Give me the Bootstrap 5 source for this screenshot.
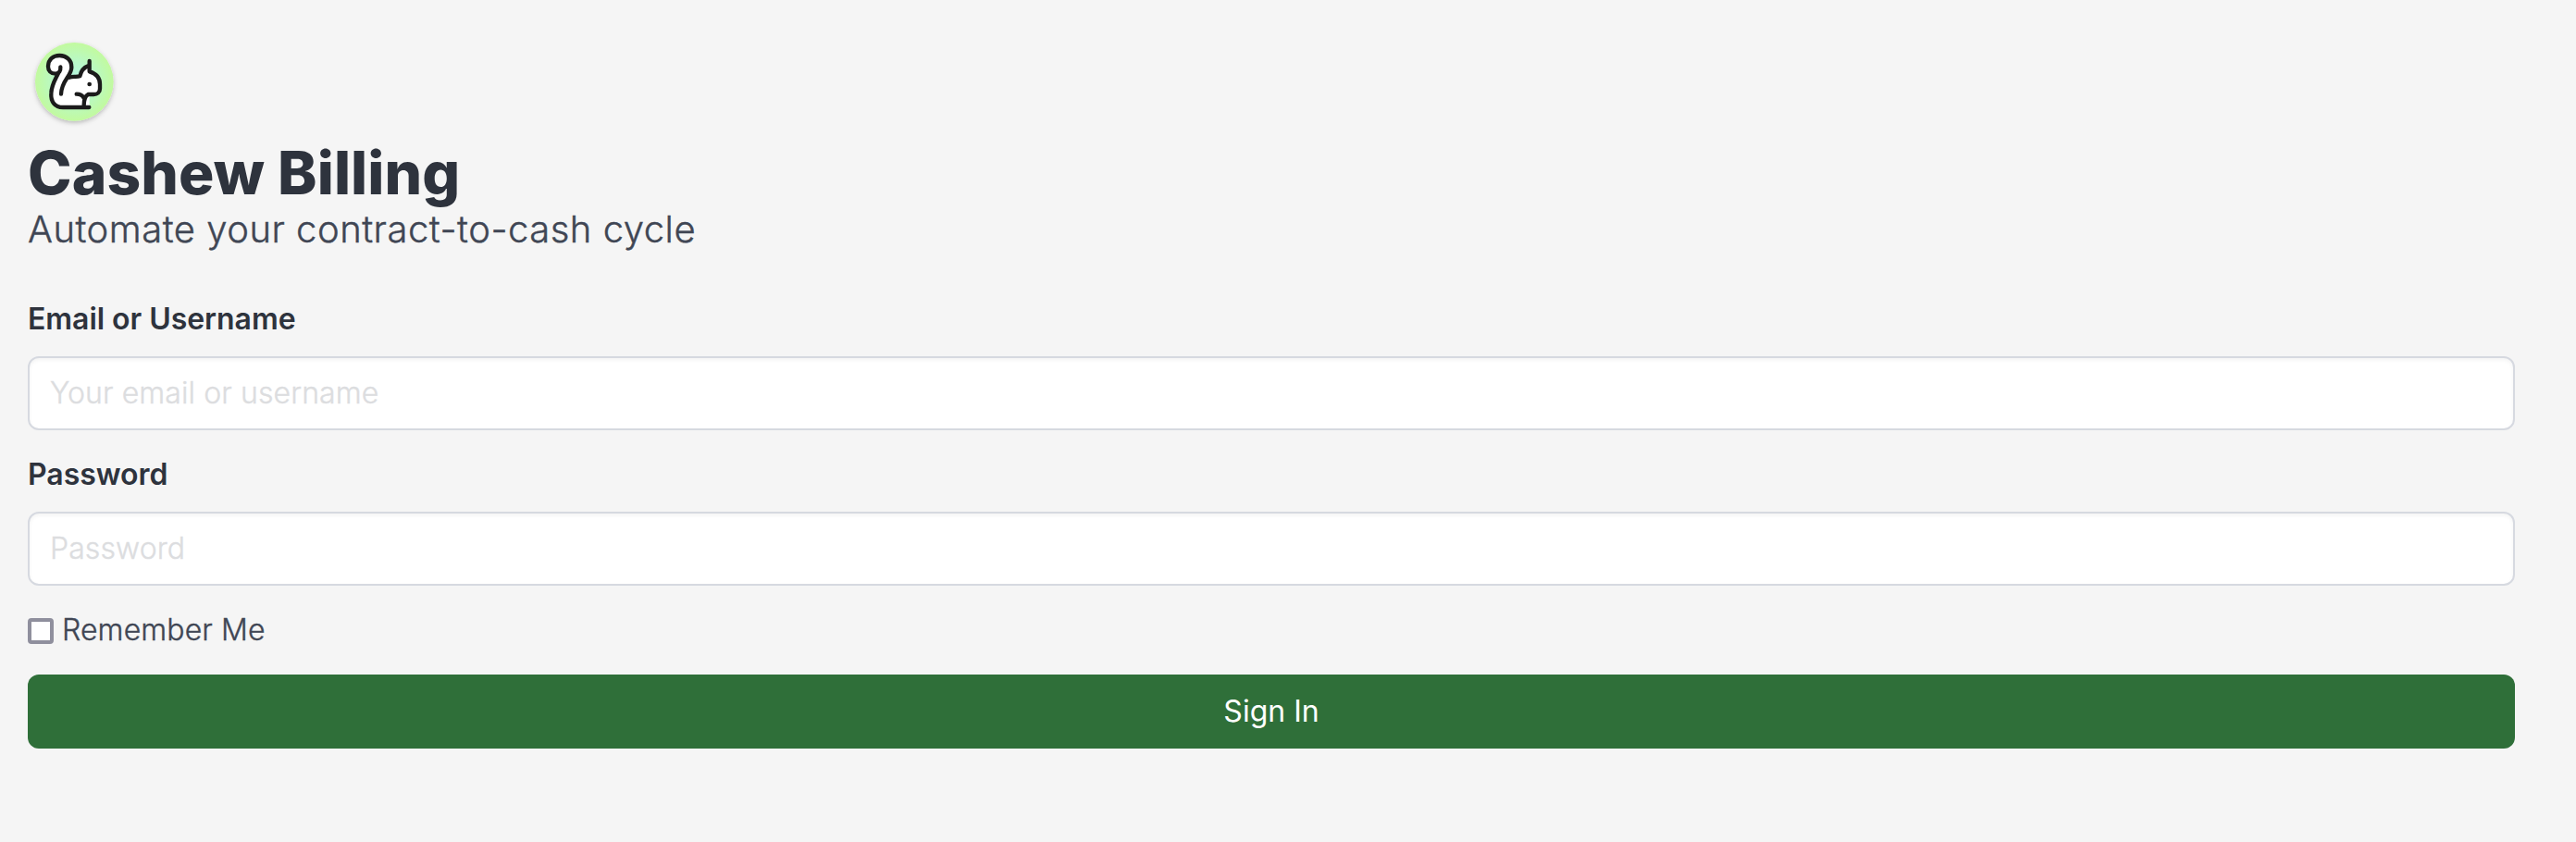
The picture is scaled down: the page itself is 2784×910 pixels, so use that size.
<!DOCTYPE html>
<html lang="en">
<head>
<meta charset="utf-8">
<title>Cashew Billing</title>
<link href="https://cdn.jsdelivr.net/npm/bootstrap@5.3.0/dist/css/bootstrap.min.css" rel="stylesheet">
<style>
  html { font-size: 32px; }
  body { background: #f5f5f5; color: #404654; font-family: Inter, sans-serif; font-weight: 300; line-height: 1.5; }
  .login { padding: 30px 66px 0 30px; }
  .logo { display: block; margin-bottom: 1px; }
  .title { font-size: 64px; font-weight: 800; line-height: 72px; color: #2e333d; letter-spacing: .08px; }
  .subtitle { font-size: 40px; line-height: 50px; margin-bottom: 48px; letter-spacing: .5px; }
  .subtitle, .remember, .form-control { -webkit-text-stroke-width: .4px; }
  .form-label { font-weight: 600; color: #2e333d; margin-bottom: 16px; display: block; letter-spacing: -.05px; }
  .form-control { height: 80px; border: 2px solid #d6d9e0; border-radius: 12px; padding: 0 22px 1px; font-weight: 300; letter-spacing: .1px; box-shadow: inset 0 2px 4px rgba(10,10,10,.05); background: #fff; }
  .form-control::placeholder { color: #dcdddf; opacity: 1; }
  .field { margin-bottom: 24px; }
  .remember { gap: 9px; letter-spacing: .1px; }
  .form-check-input[type=checkbox] { float: none; flex: none; width: 28px; height: 28px; margin: 2px 0 0; border: 4px solid #8f8f9d; border-radius: 4px; background-color: #fff; }
  .btn-sign { height: 80px; border: 0; border-radius: 12px; background: #2f6f39; color: #fff; font-weight: 400; }
</style>
</head>
<body>
<main class="login">
  <svg class="logo" width="110" height="120" viewBox="30 0 330 360" aria-label="Cashew logo">
    <defs>
      <radialGradient id="g"><stop offset="0" stop-color="#b5f5e6"/><stop offset=".5" stop-color="#b8f8c8"/><stop offset="1" stop-color="#c2fa9f"/></radialGradient>
      <filter id="s" x="-20%" y="-20%" width="140%" height="140%"><feDropShadow dx="0" dy="6" stdDeviation="8" flood-color="#000" flood-opacity=".25"/></filter>
    </defs>
    <circle cx="181" cy="175" r="127" fill="url(#g)" filter="url(#s)"/>
    <g stroke="#1b1b1b" stroke-width="13" stroke-linecap="round" stroke-linejoin="round" fill="#fff">
      <path stroke="none" d="M122 150C105 151 96 140 96 125C97 102 113 90 133 90C155 90 172 104 172 128C172 140 168 152 166 161C180 157 190 160 199 157C203 137 213 128 230 122V142C250 148 264 160 264 183V197C264 210 255 216 244 216L230 220V258H144C118 258 104 240 106 212C107 185 118 170 128 150Z"/>
      <path fill="none" d="M136 127C137 141 131 149 120 149C105 149 96 140 96 125C97 102 113 90 133 90C155 90 172 104 172 128C172 157 139 170 138 215"/>
      <path fill="none" d="M129 147C118 170 107 185 106 212C104 240 118 258 144 258H229M166 161C176 156 188 161 199 157C203 137 213 128 230 122V108M230 122V142C250 148 264 160 264 183V197C264 210 255 216 244 216H226Q212 223 212 252M188 215Q205 215 212 228"/>
      <circle cx="230" cy="183" r="7" fill="#1b1b1b" stroke="none"/>
    </g>
  </svg>
  <h1 class="title mb-0">Cashew Billing</h1>
  <p class="subtitle">Automate your contract-to-cash cycle</p>
  <form>
    <div class="field"><label class="form-label" for="user">Email or Username</label><input class="form-control" id="user" type="text" placeholder="Your email or username"></div>
    <div class="field"><label class="form-label" for="pass">Password</label><input class="form-control" id="pass" type="password" placeholder="Password"></div>
    <label class="field remember d-flex align-items-center"><input class="form-check-input" type="checkbox"><span>Remember Me</span></label>
    <button class="btn btn-sign w-100" type="button">Sign In</button>
  </form>
</main>
<script src="https://cdn.jsdelivr.net/npm/bootstrap@5.3.0/dist/js/bootstrap.bundle.min.js"></script>
</body>
</html>
